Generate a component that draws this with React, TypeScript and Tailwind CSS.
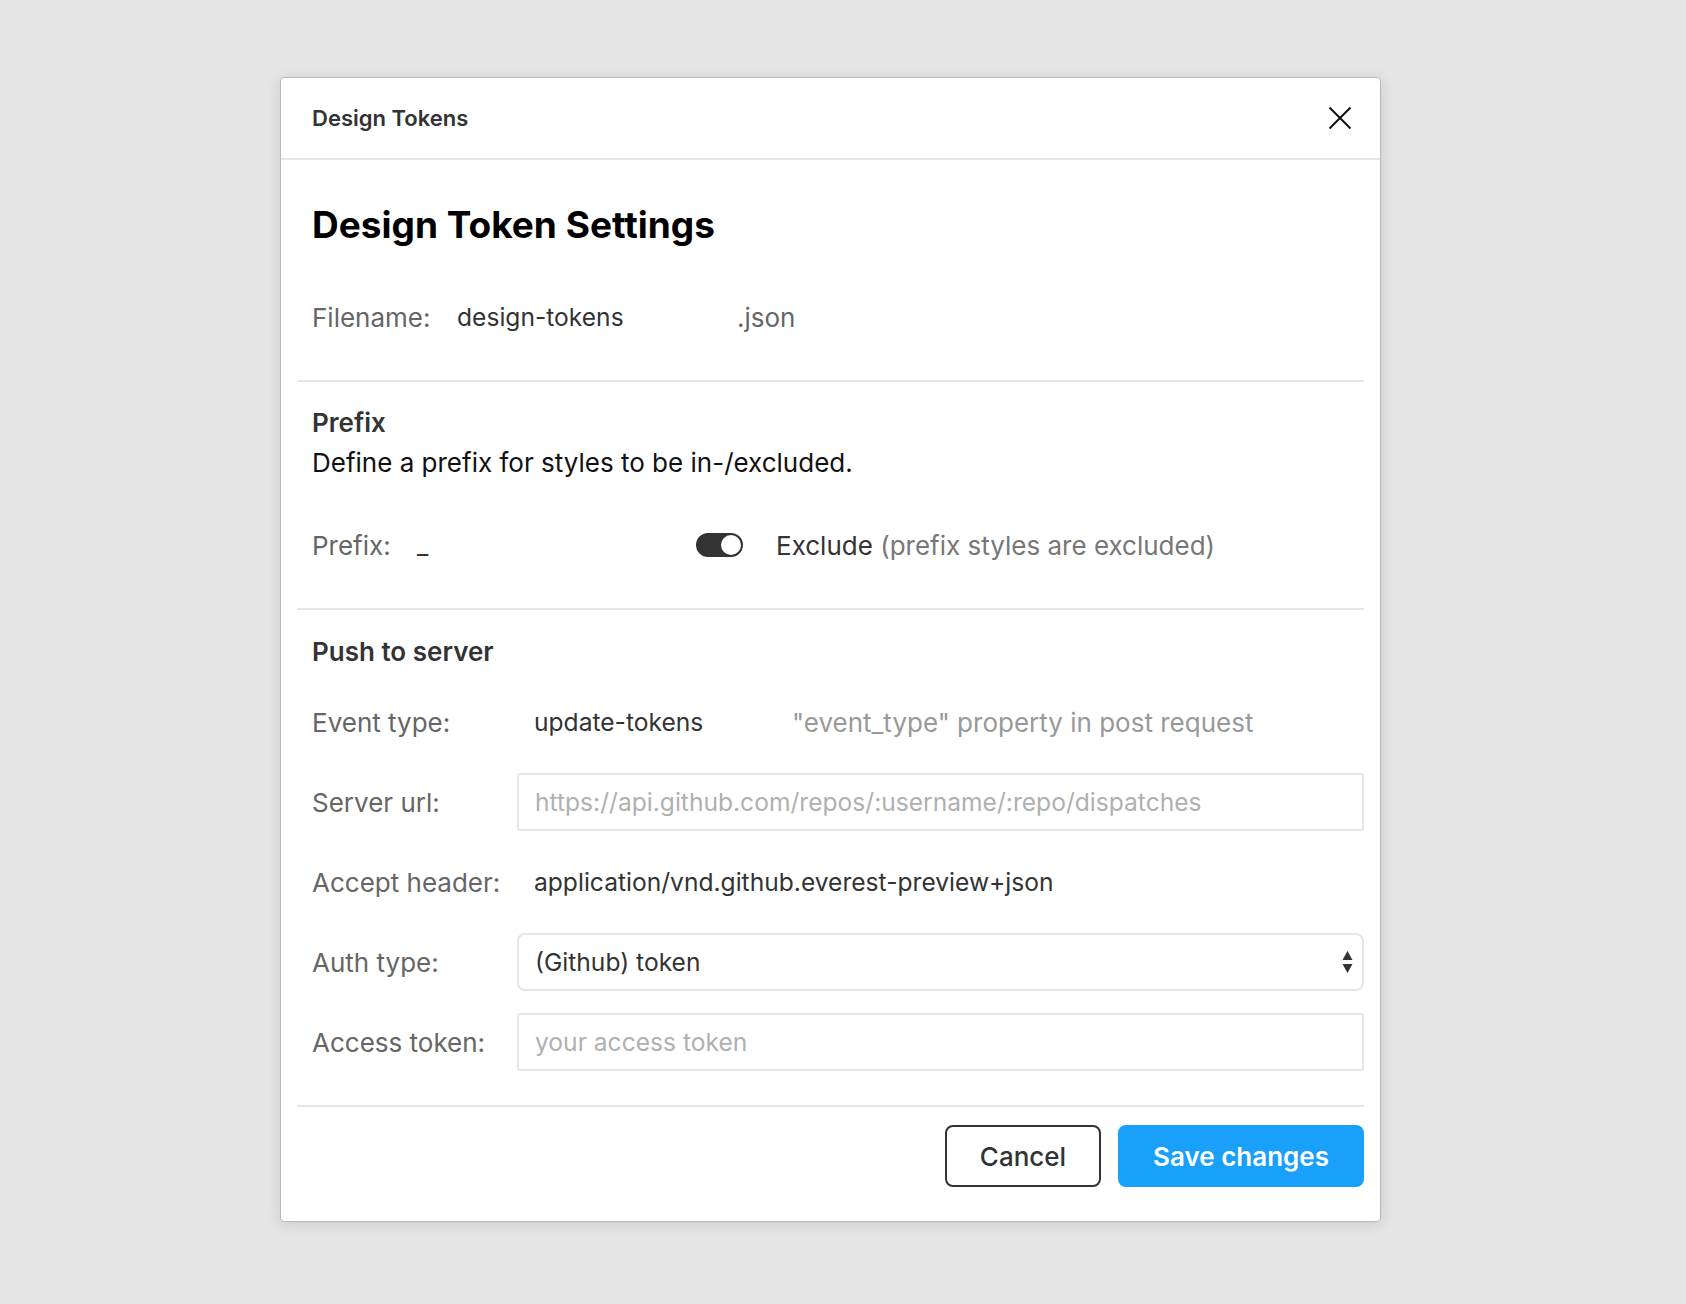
import React from "react"

function Row({ label, children }: { label: string; children: React.ReactNode }) {
  return (
    <div className="flex h-[58px] items-center">
      <div className="w-[205px] shrink-0 text-[#666]">{label}</div>
      {children}
    </div>
  )
}

export default function App() {
  return (
    <div className="min-h-screen bg-[#e5e5e5] pl-[280px] pt-[77px] font-['Inter',sans-serif] text-[26px]">
      <div className="flex w-[1101px] flex-col rounded-[4px] border border-[#b9b9b9] bg-white shadow-[0_2px_14px_rgba(0,0,0,0.12)]">
        {/* header */}
        <div className="flex h-[82px] items-center justify-between border-b-2 border-[#e6e6e6] pl-[31px] pr-[28px]">
          <span className="text-[22px] font-semibold text-[#333]">Design Tokens</span>
          <button className="flex h-[24px] w-[24px] items-center justify-center">
            <svg width="24" height="24" viewBox="0 0 24 24" fill="none" stroke="#111" strokeWidth="2">
              <path d="M1.5 1.5 L22.5 22.5 M22.5 1.5 L1.5 22.5" />
            </svg>
          </button>
        </div>

        <div className="flex flex-col px-4">
          {/* title + filename */}
          <div className="border-b-2 border-[#e6e6e6] pb-[34px] pl-[15px] pt-[45px]">
            <h1 className="text-[37px] font-bold leading-[40px] text-black">Design Token Settings</h1>
            <div className="mt-[43px] flex h-[58px] items-center">
              <div className="w-[145px] text-[#666]">Filename:</div>
              <div className="w-[280px] text-[24.6px] text-[#333]">design-tokens</div>
              <div className="text-[#666]">.json</div>
            </div>
          </div>

          {/* prefix */}
          <div className="border-b-2 border-[#e6e6e6] pb-[34px] pl-[15px] pt-[25px]">
            <h2 className="font-semibold leading-[32px] text-[#333]">Prefix</h2>
            <p className="mt-[8px] leading-[32px] text-[#111]">Define a prefix for styles to be in-/excluded.</p>
            <div className="mt-[37px] flex h-[58px] items-center">
              <div className="w-[105px] text-[#666]">Prefix:</div>
              <div className="w-[279px] text-[24.6px] text-[#333]">_</div>
              <div className="flex h-[24px] w-[47px] items-center justify-end rounded-full bg-[#333] p-[2px]">
                <div className="h-[20px] w-[20px] rounded-full bg-white" />
              </div>
              <div className="ml-[33px]">
                <span className="text-[#333]">Exclude</span>{" "}
                <span className="text-[#777]">(prefix styles are excluded)</span>
              </div>
            </div>
          </div>

          {/* push to server */}
          <div className="flex flex-col gap-[22px] border-b-2 border-[#e6e6e6] pb-[34px] pl-[15px] pt-[26px]">
            <h2 className="mb-[3px] font-semibold leading-[32px] text-[#333]">Push to server</h2>
            <Row label="Event type:">
              <div className="w-[275px] pl-[17px] text-[24.6px] text-[#333]">update-tokens</div>
              <div className="text-[#999]">"event_type" property in post request</div>
            </Row>
            <Row label="Server url:">
              <div className="flex h-full flex-1 items-center rounded-[3px] border-2 border-[#e6e6e6] px-[16px] text-[24.6px] text-[#b0b0b0]">
                https://api.github.com/repos/:username/:repo/dispatches
              </div>
            </Row>
            <Row label="Accept header:">
              <div className="pl-[17px] text-[24.6px] text-[#333]">application/vnd.github.everest-preview+json</div>
            </Row>
            <Row label="Auth type:">
              <div className="flex h-full flex-1 items-center justify-between rounded-[8px] border-2 border-[#e6e6e6] pl-[16px] pr-[9px] text-[24.6px] text-[#333]">
                <span>(Github) token</span>
                <svg width="11" height="24" viewBox="0 0 11 24" fill="#333">
                  <path d="M5.5 1 L10.5 10 L0.5 10 Z M0.5 14 L10.5 14 L5.5 23 Z" />
                </svg>
              </div>
            </Row>
            <Row label="Access token:">
              <div className="flex h-full flex-1 items-center rounded-[3px] border-2 border-[#e6e6e6] px-[16px] text-[24.6px] text-[#b0b0b0]">
                your access token
              </div>
            </Row>
          </div>

          {/* footer */}
          <div className="flex justify-end gap-[17px] pb-[34px] pt-[18px]">
            <button className="h-[62px] w-[156px] rounded-[8px] border-2 border-[#333] font-medium text-[#333]">
              Cancel
            </button>
            <button className="h-[62px] w-[246px] rounded-[8px] bg-[#18a0fb] font-semibold text-white">
              Save changes
            </button>
          </div>
        </div>
      </div>
    </div>
  )
}
